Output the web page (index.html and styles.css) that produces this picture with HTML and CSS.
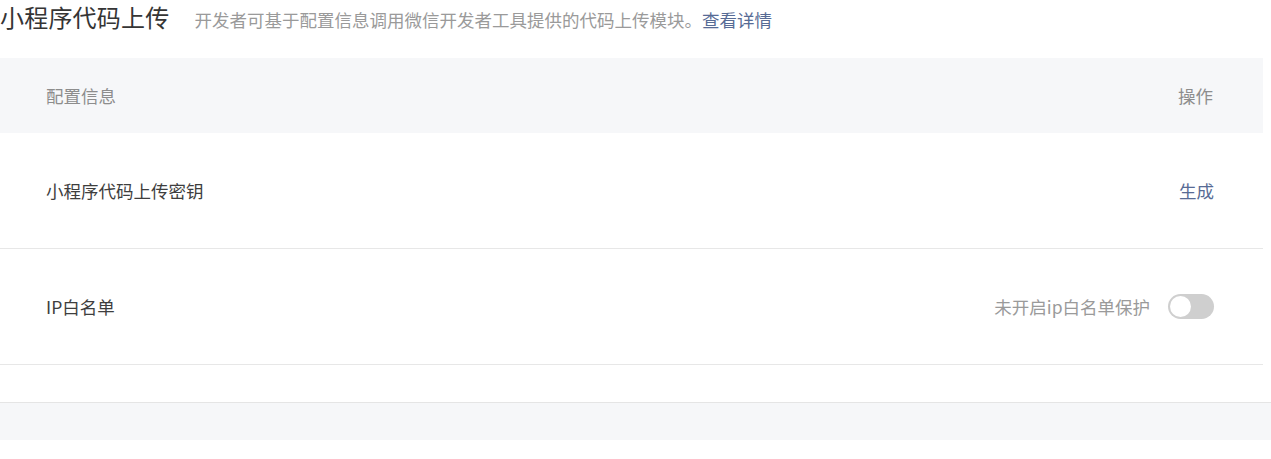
FILE: index.html
```html
<!DOCTYPE html>
<html lang="zh-CN">

<head>
  <meta charset="UTF-8">
  <meta name="viewport" content="width=device-width, initial-scale=1.0">
  <title>小程序代码上传</title>
  <link rel="stylesheet" href="styles.css">
</head>

<body>
  <div class="page-header">
    <h2 class="page-title">小程序代码上传</h2>
    <p class="page-desc">开发者可基于配置信息调用微信开发者工具提供的代码上传模块。<a href="#" class="link">查看详情</a></p>
  </div>

  <div class="table">
    <div class="table-head">
      <span>配置信息</span>
      <span>操作</span>
    </div>

    <div class="table-row">
      <span class="row-name">小程序代码上传密钥</span>
      <a href="#" class="link">生成</a>
    </div>

    <div class="table-row">
      <span class="row-name">IP白名单</span>
      <div class="switch-wrap">
        <span class="switch-tip">未开启ip白名单保护</span>
        <span class="switch"><span class="switch-knob"></span></span>
      </div>
    </div>
  </div>

  <div class="page-foot"></div>
</body>

</html>
```

FILE: styles.css
```css
* {
  margin: 0;
  padding: 0;
  box-sizing: border-box;
}

body {
  background: #fff;
  font-family: "Microsoft YaHei", "Noto Sans CJK SC", "Noto Sans", sans-serif;
  font-size: 17.5px;
  color: #3e3e3e;
}

.link {
  color: #576b95;
  text-decoration: none;
}

.page-header {
  display: flex;
  align-items: baseline;
  height: 58px;
  padding-top: 2px;
}

.page-title {
  font-size: 24px;
  font-weight: 400;
  line-height: 30px;
  color: #353535;
  margin-right: 25px;
  letter-spacing: 0.2px;
}

.page-desc {
  font-size: 17.5px;
  color: #9a9a9a;
  line-height: 30px;
}

.table {
  width: 1263px;
}

.table-head {
  display: flex;
  justify-content: space-between;
  align-items: center;
  height: 75px;
  padding: 0 50px 0 46px;
  background: #f6f7f9;
  color: #8d8d8d;
}

.table-row {
  display: flex;
  justify-content: space-between;
  align-items: center;
  height: 116px;
  padding: 0 49px 0 46px;
  border-bottom: 1px solid #e7e7e7;
}

.switch-wrap {
  display: flex;
  align-items: center;
  gap: 18px;
}

.switch-tip {
  color: #9a9a9a;
}

.switch {
  display: flex;
  align-items: center;
  width: 46px;
  height: 25px;
  padding: 0 2px;
  border-radius: 13px;
  background: #cfcfcf;
}

.switch-knob {
  width: 21px;
  height: 21px;
  border-radius: 50%;
  background: #fff;
}

.page-foot {
  margin-top: 37px;
  height: 38px;
  border-top: 1px solid #e5e5e5;
  background: #f6f7f9;
}
```
